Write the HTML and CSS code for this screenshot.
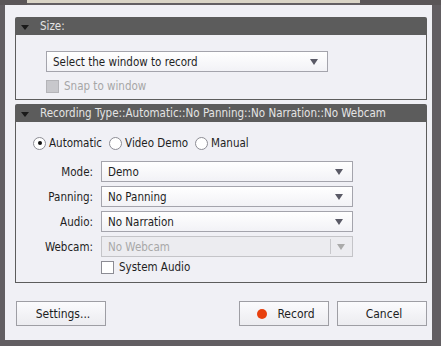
FILE: index.html
```html
<!DOCTYPE html>
<html lang="en">

<head>
    <meta charset="UTF-8">
    <title>Recording Options</title>
    <link rel="stylesheet" href="styles.css">
</head>

<body>
    <div class="top-strip">
        <span class="strip-dark"></span>
        <span class="strip-light"></span>
        <span class="strip-dark"></span>
    </div>

    <div class="dialog">
        <!-- Size panel -->
        <div class="panel">
            <div class="panel-header">
                <span class="caret"></span>
                <span>Size:</span>
            </div>
            <div class="panel-body size-body">
                <div class="select wide">
                    <span>Select the window to record</span>
                    <span class="arrow"></span>
                </div>
                <label class="check disabled">
                    <span class="box"></span>
                    <span>Snap to window</span>
                </label>
            </div>
        </div>

        <!-- Recording type panel -->
        <div class="panel">
            <div class="panel-header">
                <span class="caret"></span>
                <span>Recording Type::Automatic::No Panning::No Narration::No Webcam</span>
            </div>
            <div class="panel-body type-body">
                <div class="radios">
                    <label class="radio checked"><span class="dot"></span>Automatic</label>
                    <label class="radio"><span class="dot"></span>Video Demo</label>
                    <label class="radio"><span class="dot"></span>Manual</label>
                </div>

                <div class="form">
                    <span class="label">Mode:</span>
                    <div class="select"><span>Demo</span><span class="arrow"></span></div>

                    <span class="label">Panning:</span>
                    <div class="select"><span>No Panning</span><span class="arrow"></span></div>

                    <span class="label">Audio:</span>
                    <div class="select"><span>No Narration</span><span class="arrow"></span></div>

                    <span class="label">Webcam:</span>
                    <div class="select off"><span>No Webcam</span><span class="sep"></span><span class="arrow"></span></div>

                    <span></span>
                    <label class="check">
                        <span class="box"></span>
                        <span>System Audio</span>
                    </label>
                </div>
            </div>
        </div>

        <div class="buttons">
            <button class="btn">Settings...</button>
            <span class="spacer"></span>
            <button class="btn"><span class="rec"></span>Record</button>
            <button class="btn">Cancel</button>
        </div>
    </div>
</body>

</html>
```

FILE: styles.css
```css
body {
    margin: 0;
    background: #625e62;
    font-family: "DejaVu Sans Condensed", "DejaVu Sans", sans-serif;
    font-size: 11.5px;
    color: #1e1e1e;
    width: 441px;
    height: 346px;
    overflow: hidden;
}

.top-strip {
    display: flex;
    height: 5px;
}

.strip-dark {
    width: 27px;
    background: #5a5658;
}

.strip-light {
    width: 333px;
    height: 3px;
    background: #d9d4c6;
}

.strip-dark:last-child {
    flex: 1;
}

.dialog {
    background: #f0f0f5;
    margin-left: 5px;
    padding: 12px 5px 0 10px;
    display: flex;
    flex-direction: column;
    gap: 4px;
    width: 412px;
    height: 323px;
}

.panel-header {
    height: 18px;
    background: #5c5c5c;
    color: #e4e4e4;
    font-size: 11.5px;
    display: flex;
    align-items: center;
    border-radius: 2px 2px 0 0;
}

.caret {
    width: 0;
    height: 0;
    border-left: 4px solid transparent;
    border-right: 4px solid transparent;
    border-top: 5px solid #1a1a1a;
    margin: 2px 11px 0 6px;
}

.panel-body {
    border: 1px solid #5c5c5c;
    border-top: none;
}

.size-body {
    height: 65px;
    padding: 16px 0 0 30px;
    box-sizing: border-box;
}

.select {
    height: 21px;
    box-sizing: border-box;
    border: 1px solid #a4a4ac;
    background: linear-gradient(#ffffff, #f2f2f6);
    display: flex;
    align-items: center;
    padding-left: 6px;
}

.select span:first-child {
    flex: 1;
}

.select.wide {
    width: 282px;
}

.arrow {
    width: 0;
    height: 0;
    border-left: 4px solid transparent;
    border-right: 4px solid transparent;
    border-top: 6px solid #5a5a66;
    margin-right: 9px;
}

.select.off {
    color: #a8a8a8;
    background: #ececf0;
    border-color: #c4c4c8;
}

.select.off .arrow {
    border-top-color: #aaaaaa;
    margin-right: 7px;
}

.sep {
    width: 1px;
    height: 15px;
    background: #c8c8cc;
    margin-right: 6px;
}

.check {
    display: flex;
    align-items: center;
    gap: 5px;
}

.check .box {
    width: 11px;
    height: 11px;
    border: 1px solid #8c8c94;
    background: #fff;
}

.size-body .check {
    margin-top: 7px;
}

.check.disabled {
    color: #a6a6a6;
}

.check.disabled .box {
    background: #c8c8cc;
    border-color: #b4b4b8;
}

.type-body {
    height: 161px;
    box-sizing: border-box;
    padding: 14px 0 0 17px;
}

.radios {
    display: flex;
    gap: 7px;
}

.radio {
    display: flex;
    align-items: center;
    gap: 3px;
}

.dot {
    width: 11px;
    height: 11px;
    border: 1px solid #8c8c94;
    border-radius: 50%;
    background: #fff;
    display: flex;
    align-items: center;
    justify-content: center;
}

.radio.checked .dot::after {
    content: "";
    width: 4px;
    height: 4px;
    border-radius: 50%;
    background: #111;
}

.form {
    display: grid;
    grid-template-columns: 60px 252px;
    column-gap: 8px;
    row-gap: 4px;
    align-items: center;
    margin-top: 11px;
}

.label {
    text-align: right;
}

.form .check {
    margin-top: -1px;
}

.buttons {
    display: flex;
    gap: 8px;
    margin-top: 14px;
    padding-left: 1px;
}

.spacer {
    flex: 1;
}

.btn {
    width: 90px;
    height: 25px;
    font-family: inherit;
    font-size: 12px;
    color: #1e1e1e;
    border: 1px solid #9e9ea4;
    background: linear-gradient(#fbfbfd, #ececf0);
    display: flex;
    align-items: center;
    justify-content: center;
    gap: 10px;
    padding: 0 0 0 4px;
}

.rec {
    width: 10px;
    height: 10px;
    border-radius: 50%;
    background: #e8400e;
}
```
